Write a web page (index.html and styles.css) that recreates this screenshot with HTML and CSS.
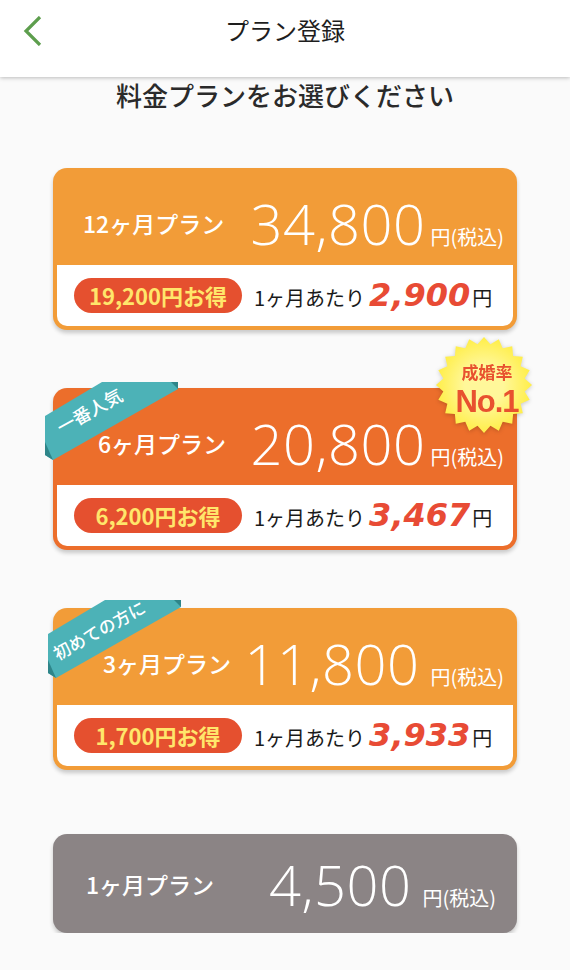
FILE: index.html
```html
<!DOCTYPE html>
<html lang="ja">
<head>
    <meta charset="UTF-8">
    <title>プラン登録</title>
    <link rel="stylesheet" href="styles.css">
</head>
<body>
    <header class="topbar">
        <a class="back" href="#">
            <svg width="20" height="30" viewBox="0 0 20 30"><polyline points="17,1 3,15 17,29" fill="none" stroke="#5d9e4d" stroke-width="3.2"/></svg>
        </a>
        <h1 class="title">プラン登録</h1>
    </header>

    <main class="plans">
        <p class="lead">料金プランをお選びください</p>

        <section class="plan">
            <div class="plan-head pad-12">
                <span class="plan-name">12ヶ月プラン</span>
                <span class="price"><span class="amount">34,800</span><span class="tax">円(税込)</span></span>
            </div>
            <div class="plan-body">
                <span class="save">19,200円お得</span>
                <span class="monthly">1ヶ月あたり<em>2,900</em>円</span>
            </div>
        </section>

        <section class="plan plan-hot">
            <svg class="ribbon" width="134" height="80" viewBox="0 0 134 80">
                <polygon points="57,0 133,0 133,7 8,78 0,73 0,34" fill="#4cb2b7"/>
                <polygon points="126,0 133,0 133,7" fill="#2e8589"/>
                <polygon points="0,60 0,73 8,78" fill="#2e8589"/>
            </svg>
            <span class="ribbon-text">一番人気</span>
            <div class="badge">
                <svg width="98" height="98" viewBox="0 0 100 100">
                    <defs>
                        <radialGradient id="glow">
                            <stop offset="0.4" stop-color="#fff79a"/>
                            <stop offset="1" stop-color="#ffee48"/>
                        </radialGradient>
                    </defs>
                    <polygon fill="url(#glow)" points="99,50 91.5,56.6 96.6,65.1 87.4,69.1 89.6,78.8 79.7,79.7 78.8,89.6 69.1,87.4 65.1,96.6 56.6,91.5 50,99 43.4,91.5 34.9,96.6 30.9,87.4 21.2,89.6 20.3,79.7 10.4,78.8 12.6,69.1 3.4,65.1 8.5,56.6 1,50 8.5,43.4 3.4,34.9 12.6,30.9 10.4,21.2 20.3,20.3 21.2,10.4 30.9,12.6 34.9,3.4 43.4,8.5 50,1 56.6,8.5 65.1,3.4 69.1,12.6 78.8,10.4 79.7,20.3 89.6,21.2 87.4,30.9 96.6,34.9 91.5,43.4"/>
                </svg>
                <div class="badge-text">
                    <span class="badge-small">成婚率</span>
                    <span class="badge-big">No.1</span>
                </div>
            </div>
            <div class="plan-head pad-6">
                <span class="plan-name">6ヶ月プラン</span>
                <span class="price"><span class="amount">20,800</span><span class="tax">円(税込)</span></span>
            </div>
            <div class="plan-body">
                <span class="save">6,200円お得</span>
                <span class="monthly">1ヶ月あたり<em>3,467</em>円</span>
            </div>
        </section>

        <section class="plan">
            <svg class="ribbon ribbon-low" width="134" height="80" viewBox="0 0 134 80">
                <polygon points="57,0 133,0 133,7 8,78 0,73 0,34" fill="#4cb2b7"/>
                <polygon points="126,0 133,0 133,7" fill="#2e8589"/>
                <polygon points="0,60 0,73 8,78" fill="#2e8589"/>
            </svg>
            <span class="ribbon-text ribbon-text-long">初めての方に</span>
            <div class="plan-head pad-3">
                <span class="plan-name">3ヶ月プラン</span>
                <span class="price"><span class="amount">11,800</span><span class="tax wide">円(税込)</span></span>
            </div>
            <div class="plan-body">
                <span class="save">1,700円お得</span>
                <span class="monthly">1ヶ月あたり<em>3,933</em>円</span>
            </div>
        </section>

        <section class="plan plan-gray">
            <div class="plan-head pad-1">
                <span class="plan-name">1ヶ月プラン</span>
                <span class="price"><span class="amount">4,500</span><span class="tax wide">円(税込)</span></span>
            </div>
        </section>
    </main>
</body>
</html>
```

FILE: styles.css
```css
*{
    margin: 0;
    padding: 0;
    box-sizing: border-box;
}
body{
    background-color: #fafafa;
    font-family: "Noto Sans CJK JP", sans-serif;
    color: #222;
    width: 570px;
}

/* header */
.topbar{
    height: 77px;
    background: #fff;
    box-shadow: 0 1px 4px rgba(0,0,0,0.25);
    display: grid;
    grid-template-columns: 80px 1fr 80px;
    align-items: center;
    padding-bottom: 18px;
    position: relative;
    z-index: 2;
}
.back{
    display: flex;
    padding-left: 23px;
    padding-top: 2px;
}
.title{
    font-size: 24px;
    font-weight: 400;
    text-align: center;
    color: #1e1e1e;
}

/* list */
.plans{
    display: flex;
    flex-direction: column;
    gap: 58px;
    padding: 0 53px;
}
.lead{
    font-size: 26px;
    font-weight: 500;
    line-height: 36px;
    text-align: center;
    color: #2a2a2a;
    margin-bottom: -3px;
}

.plan{
    position: relative;
    background: #f29c38;
    border-radius: 14px;
    padding: 0 4px 4px;
    box-shadow: 0 3px 4px rgba(0,0,0,0.2);
}
.plan-hot{
    background: #ec6e2b;
}
.plan-gray{
    background: #8b8485;
    padding: 0;
    margin-top: 6px;
}

.plan-head{
    height: 97px;
    padding: 12px 9px 0 26px;
    display: flex;
    align-items: center;
    justify-content: space-between;
    color: #fff;
}
.pad-6{
    padding-left: 41px;
}
.pad-3{
    padding-left: 46px;
}
.pad-1{
    height: 99px;
    padding: 0 21px 0 33px;
}
.plan-name{
    font-size: 23px;
    font-weight: 500;
}
.price{
    display: flex;
    align-items: baseline;
}
.amount{
    font-family: "Open Sans", Lato, sans-serif;
    font-weight: 300;
    font-size: 56px;
    letter-spacing: 0.5px;
    line-height: 1;
}
.tax{
    font-size: 20px;
    margin-left: 5px;
}
.tax.wide{
    margin-left: 11px;
}

.plan-body{
    height: 61px;
    background: #fff;
    border-radius: 0 0 10px 10px;
    display: flex;
    align-items: center;
    padding: 0 17px;
}
.save{
    width: 168px;
    height: 35px;
    border-radius: 18px;
    background: #e5502f;
    color: #ffe66b;
    font-size: 22px;
    font-weight: 700;
    line-height: 35px;
    text-align: center;
    flex: none;
}
.monthly{
    margin-left: 12px;
    font-size: 20px;
    color: #1a1a1a;
    display: flex;
    align-items: baseline;
}
.monthly em{
    font-family: "DejaVu Sans", sans-serif;
    font-style: italic;
    font-weight: 700;
    font-size: 32px;
    color: #e84b35;
    margin: 0 2px 0 4px;
    line-height: 1;
}

/* ribbon */
.ribbon{
    position: absolute;
    left: -8px;
    top: -6px;
}
.ribbon-low{
    top: -8px;
    left: -5px;
}
.ribbon-text{
    position: absolute;
    left: -24px;
    top: 12px;
    width: 120px;
    line-height: 20px;
    text-align: center;
    color: #fff;
    font-size: 18px;
    font-weight: 500;
    transform: rotate(-29deg);
}
.ribbon-text-long{
    left: -14px;
    top: 12px;
    font-size: 17px;
}

/* badge */
.badge{
    position: absolute;
    left: 382px;
    top: -52px;
    width: 98px;
    height: 98px;
    filter: drop-shadow(0 1px 2px rgba(0,0,0,0.2));
}
.badge svg{
    display: block;
}
.badge-text{
    position: absolute;
    inset: 0;
    display: flex;
    flex-direction: column;
    align-items: center;
    justify-content: center;
    color: #e8512f;
    font-weight: 700;
    padding: 8px 0 0 6px;
}
.badge-small{
    font-size: 17px;
    line-height: 25px;
}
.badge-big{
    font-family: "Liberation Sans", sans-serif;
    font-size: 31px;
    line-height: 36px;
    letter-spacing: -1px;
}
```
